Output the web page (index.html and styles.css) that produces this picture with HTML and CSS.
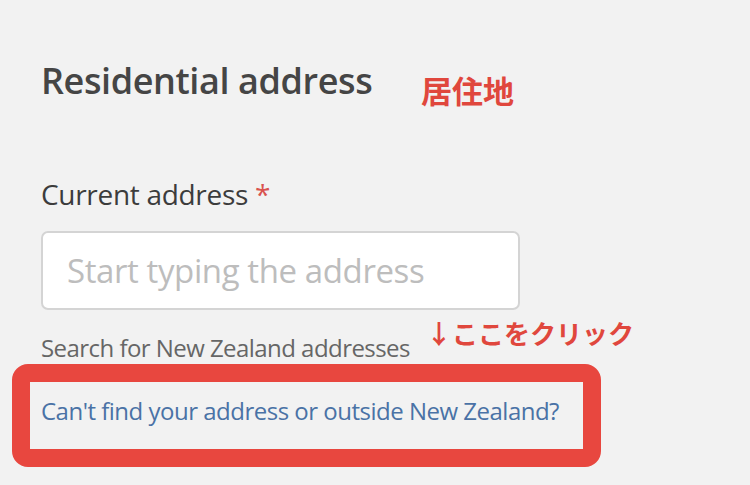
FILE: index.html
```html
<!DOCTYPE html>
<html lang="en">
<head>
<meta charset="utf-8">
<link rel="stylesheet" href="styles.css">
</head>
<body>
<main class="page">
  <h2 class="title">Residential address</h2>
  <label class="label" for="addr">Current address <span class="req">*</span></label>
  <input class="field" id="addr" type="text" placeholder="Start typing the address">
  <p class="hint">Search for New Zealand addresses</p>
  <div class="highlight">
    <a class="link" href="#">Can't find your address or outside New Zealand?</a>
  </div>
  <span class="note note-title">居住地</span>
  <span class="note note-click">↓ここをクリック</span>
</main>
</body>
</html>
```
FILE: styles.css
```css
html, body {
  margin: 0;
  padding: 0;
  background: #f2f2f2;
}
.page {
  position: relative;
  width: 750px;
  height: 485px;
  padding: 56px 0 0 41px;
  box-sizing: border-box;
  font-family: "Open Sans", "Noto Sans", sans-serif;
}
.title {
  margin: 0;
  font-size: 36px;
  line-height: 50px;
  font-weight: 600;
  color: #454545;
  letter-spacing: -0.4px;
}
.label {
  display: block;
  margin-top: 70px;
  font-size: 28px;
  line-height: 36px;
  color: #3c3c3c;
  letter-spacing: -0.3px;
}
.req {
  color: #d9534f;
}
.field {
  display: block;
  margin-top: 19px;
  width: 479px;
  height: 79px;
  box-sizing: border-box;
  border: 2px solid #d4d4d4;
  border-radius: 7px;
  background: #fff;
  padding: 0 0 0 24px;
  font-family: inherit;
  font-size: 33px;
  letter-spacing: -0.4px;
}
.field::placeholder {
  color: #bdbdbd;
}
.hint {
  margin: 23px 0 0;
  font-size: 24px;
  line-height: 30px;
  color: #666;
  letter-spacing: -0.55px;
}
.highlight {
  margin: 1px 0 0 -29px;
  width: 589px;
  height: 103px;
  box-sizing: border-box;
  border: 18px solid #e8473f;
  border-radius: 16px;
  padding: 14px 0 0 11px;
  display: flex;
  align-items: flex-start;
}
.link {
  font-size: 24px;
  line-height: 30px;
  color: #4a72a6;
  text-decoration: none;
  letter-spacing: -0.5px;
}
.note {
  position: absolute;
  font-family: "Noto Sans CJK JP", sans-serif;
  font-weight: 700;
  color: #e0473d;
  line-height: 1;
}
.note-title {
  left: 421px;
  top: 74px;
  font-size: 31px;
}
.note-click {
  left: 426px;
  top: 320px;
  font-size: 26px;
}
```
